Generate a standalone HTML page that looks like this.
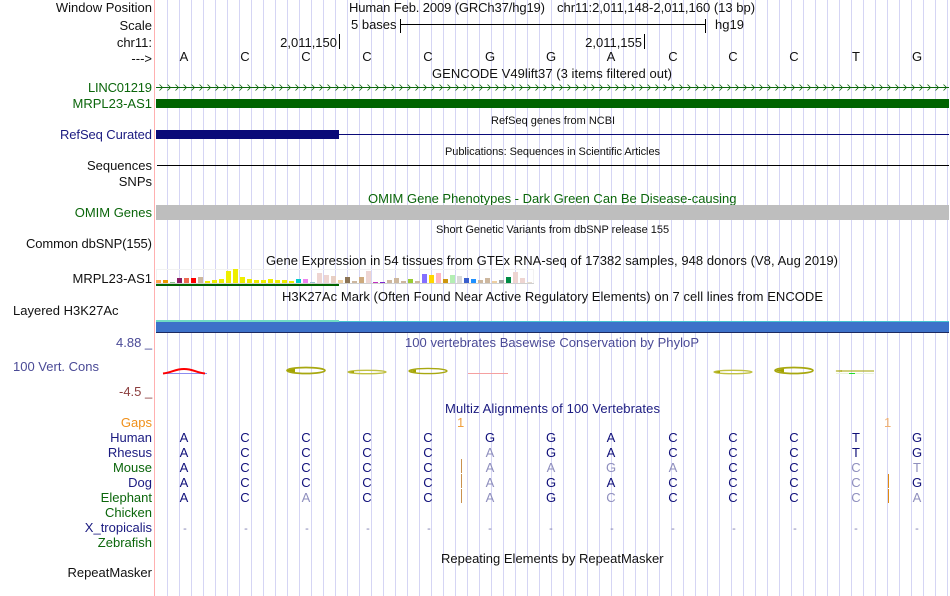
<!DOCTYPE html>
<html><head><meta charset="utf-8"><title>Genome Browser</title>
<style>
html,body{margin:0;padding:0;background:#fff}
svg{display:block}
text{font-family:"Liberation Sans",Arial,sans-serif;font-size:13px;fill:#111}
.e{text-anchor:end}
.g{fill:#0b660b}
.n{fill:#1a1a80}
.m{text-anchor:middle}
.d{fill:#10107a;text-anchor:middle}
.f{fill:#8f8fbe;text-anchor:middle}
.s{font-size:11px}
</style></head><body>
<svg width="950" height="596" viewBox="0 0 950 596" xmlns="http://www.w3.org/2000/svg">
<defs>
<pattern id="chev" x="157" y="83" width="8" height="9" patternUnits="userSpaceOnUse"><path d="M2.5 1.5L5.5 4.5L2.5 7.5" fill="none" stroke="#0b660b" stroke-width=".8"/></pattern>
</defs>
<rect width="950" height="596" fill="#fff"/>
<line x1="167" y1="298" x2="949" y2="298" stroke="#d5d5f4" stroke-width="596" stroke-dasharray="1 11"/>
<rect x="154" y="0" width="1" height="596" fill="#ffb0b0"/>

<!-- header -->
<text class="e" x="152" y="12">Window Position</text>
<text class="e" x="152" y="30">Scale</text>
<text class="e" x="152" y="47">chr11:</text>
<text class="e" x="152" y="63">---&gt;</text>
<text x="349" y="12" textLength="196">Human Feb. 2009 (GRCh37/hg19)</text>
<text x="557" y="12">chr11:2,011,148-2,011,160 (13 bp)</text>
<text x="351" y="29">5 bases</text>
<path d="M400.5 19V33M705.5 19V33" stroke="#000" fill="none"/>
<rect x="400" y="24" width="306" height="1" fill="#000"/>
<text x="715" y="29">hg19</text>
<text class="e" x="337" y="47">2,011,150</text>
<rect x="339" y="34" width="1" height="15" fill="#000"/>
<text class="e" x="642" y="47">2,011,155</text>
<rect x="644" y="34" width="1" height="15" fill="#000"/>
<text class="m" x="184 245 306 367 428 490 551 611 673 733 794 856 917" y="61">ACCCCGGACCCTG</text>

<!-- GENCODE -->
<text x="432" y="78" textLength="240">GENCODE V49lift37 (3 items filtered out)</text>
<text class="g" x="88" y="92" textLength="64">LINC01219</text>
<rect x="156" y="87" width="793" height="1" fill="#0b660b"/>
<rect x="156" y="83" width="793" height="9" fill="url(#chev)"/>
<text class="e g" x="152" y="108">MRPL23-AS1</text>
<rect x="156" y="99" width="793" height="9" fill="#006400"/>

<!-- RefSeq -->
<text class="s" x="491" y="124">RefSeq genes from NCBI</text>
<text class="n" x="60" y="139" textLength="92">RefSeq Curated</text>
<rect x="156" y="130" width="183" height="9" fill="#0a0a78"/>
<rect x="339" y="134" width="610" height="1" fill="#0a0a78"/>

<!-- Publications -->
<text class="s" x="445" y="155" textLength="215">Publications: Sequences in Scientific Articles</text>
<text class="e" x="152" y="170">Sequences</text>
<rect x="157" y="165" width="792" height="1" fill="#000"/>
<text class="e" x="152" y="186">SNPs</text>

<!-- OMIM -->
<text class="g" x="368" y="203">OMIM Gene Phenotypes - Dark Green Can Be Disease-causing</text>
<text class="e g" x="152" y="217">OMIM Genes</text>
<rect x="156" y="205" width="793" height="15" fill="#bebebe"/>

<!-- dbSNP -->
<text class="s" x="436" y="233">Short Genetic Variants from dbSNP release 155</text>
<text x="26" y="248" textLength="126">Common dbSNP(155)</text>

<!-- GTEx -->
<text x="266" y="265" textLength="572">Gene Expression in 54 tissues from GTEx RNA-seq of 17382 samples, 948 donors (V8, Aug 2019)</text>
<text class="e" x="152" y="283">MRPL23-AS1</text>
<rect x="156.5" y="269.5" width="377" height="14" fill="none" stroke="#f2f2f2"/>
<rect x="156" y="283" width="378" height="1" fill="#d0d0d0"/>
<g>
<rect x="156" y="280" width="5" height="3" fill="#ffa54f"/>
<rect x="163" y="280" width="5" height="3" fill="#ee9a00"/>
<rect x="170" y="282" width="5" height="1" fill="#8fbc8f"/>
<rect x="177" y="278" width="5" height="5" fill="#8b1c62"/>
<rect x="184" y="278" width="5" height="5" fill="#ee6a50"/>
<rect x="191" y="278" width="5" height="5" fill="#ff0000"/>
<rect x="198" y="277" width="5" height="6" fill="#cdb79e"/>
<rect x="205" y="281" width="5" height="2" fill="#eeee00"/>
<rect x="212" y="280" width="5" height="3" fill="#eeee00"/>
<rect x="219" y="279" width="5" height="4" fill="#eeee00"/>
<rect x="226" y="271" width="5" height="12" fill="#eeee00"/>
<rect x="233" y="269" width="5" height="14" fill="#eeee00"/>
<rect x="240" y="277" width="5" height="6" fill="#eeee00"/>
<rect x="247" y="279" width="5" height="4" fill="#eeee00"/>
<rect x="254" y="280" width="5" height="3" fill="#eeee00"/>
<rect x="261" y="280" width="5" height="3" fill="#eeee00"/>
<rect x="268" y="279" width="5" height="4" fill="#eeee00"/>
<rect x="275" y="280" width="5" height="3" fill="#eeee00"/>
<rect x="282" y="280" width="5" height="3" fill="#eeee00"/>
<rect x="289" y="281" width="5" height="2" fill="#eeee00"/>
<rect x="296" y="279" width="5" height="4" fill="#00cdcd"/>
<rect x="303" y="279" width="5" height="4" fill="#ee82ee"/>
<rect x="310" y="282" width="5" height="1" fill="#9ac0cd"/>
<rect x="317" y="273" width="5" height="10" fill="#eed5d2"/>
<rect x="324" y="275" width="5" height="8" fill="#eed5d2"/>
<rect x="331" y="276" width="5" height="7" fill="#e8cfc4"/>
<rect x="338" y="280" width="5" height="3" fill="#eecfa1"/>
<rect x="345" y="277" width="5" height="6" fill="#8b7355"/>
<rect x="352" y="281" width="5" height="2" fill="#cdb79e"/>
<rect x="359" y="277" width="5" height="6" fill="#cdaa7d"/>
<rect x="366" y="271" width="5" height="12" fill="#eed5d2"/>
<rect x="373" y="282" width="5" height="1" fill="#c030c0"/>
<rect x="380" y="282" width="5" height="1" fill="#7d26cd"/>
<rect x="387" y="280" width="5" height="3" fill="#cdb79e"/>
<rect x="394" y="278" width="5" height="5" fill="#cdb79e"/>
<rect x="401" y="281" width="5" height="2" fill="#cdb79e"/>
<rect x="408" y="279" width="5" height="4" fill="#9acd32"/>
<rect x="415" y="281" width="5" height="2" fill="#cdb79e"/>
<rect x="422" y="274" width="5" height="9" fill="#8470ff"/>
<rect x="429" y="275" width="5" height="8" fill="#ffd700"/>
<rect x="436" y="273" width="5" height="10" fill="#ffb6c1"/>
<rect x="443" y="279" width="5" height="4" fill="#cd950c"/>
<rect x="450" y="275" width="5" height="8" fill="#b4eeb4"/>
<rect x="457" y="276" width="5" height="7" fill="#d9d9d9"/>
<rect x="464" y="278" width="5" height="5" fill="#3a5fcd"/>
<rect x="471" y="279" width="5" height="4" fill="#1e90ff"/>
<rect x="478" y="280" width="5" height="3" fill="#cdb79e"/>
<rect x="485" y="278" width="5" height="5" fill="#cdb79e"/>
<rect x="492" y="281" width="5" height="2" fill="#eecfa1"/>
<rect x="499" y="280" width="5" height="3" fill="#a6a6a6"/>
<rect x="506" y="277" width="5" height="6" fill="#008b45"/>
<rect x="513" y="272" width="5" height="11" fill="#eed5d2"/>
<rect x="520" y="278" width="5" height="5" fill="#eed5d2"/>
<rect x="527" y="282" width="5" height="1" fill="#e5dcd0"/>
</g>
<rect x="156" y="284" width="183" height="2" fill="#006400"/>

<!-- H3K27Ac -->
<text x="282" y="301" textLength="541">H3K27Ac Mark (Often Found Near Active Regulatory Elements) on 7 cell lines from ENCODE</text>
<text x="13" y="315">Layered H3K27Ac</text>
<rect x="156" y="320" width="183" height="2" fill="#6fdcc4"/>
<rect x="339" y="321" width="610" height="1" fill="#45c4d0"/>
<rect x="156" y="322" width="793" height="10" fill="#3d72c9"/>
<rect x="156" y="332" width="793" height="1" fill="#1c2a60"/>

<!-- Conservation -->
<text x="116" y="347" style="fill:#4a4a96">4.88 _</text>
<text x="405" y="347" textLength="294" style="fill:#4a4a96">100 vertebrates Basewise Conservation by PhyloP</text>
<text x="13" y="371" style="fill:#4a4a96">100 Vert. Cons</text>
<text x="119" y="396" style="fill:#8c3f3f">-4.5 _</text>
<rect x="166" y="373" width="41" height="1" fill="#8c8cf0"/>
<path d="M163 373.5C172 372.5 175 369 184 369C193 369 196 372.5 205 373.5" fill="none" stroke="#f00" stroke-width="2"/>
<g fill="none" stroke="#a8a810">
<ellipse cx="306" cy="370.5" rx="19" ry="3" stroke-width="1.7"/>
<ellipse cx="367" cy="372" rx="19" ry="1.7" stroke-width="1.4" stroke="#c0c040"/>
<ellipse cx="428" cy="371" rx="19" ry="2.6" stroke-width="1.4"/>
<ellipse cx="733" cy="372" rx="19" ry="1.7" stroke-width="1.4" stroke="#c0c040"/>
<ellipse cx="794" cy="370.5" rx="19" ry="3" stroke-width="1.7"/>
<path d="M836 371H874" stroke-width="1.3" stroke="#b4b430"/>
</g>
<path d="M286 370.5L295 368.5V372.5ZM348 372L354 371V373ZM409 371L416 369.5V372.5ZM714 372L720 371V373ZM775 370.5L784 368.5V372.5ZM835 371L842 370.2V371.8Z" fill="#a4a400"/>
<rect x="836" y="373" width="38" height="1" fill="#eaf5da"/>
<rect x="849" y="373" width="6" height="1" fill="#22dd22"/>
<rect x="468" y="373" width="40" height="1" fill="#f5a0a0"/>

<!-- Multiz -->
<text x="445" y="413" class="n" textLength="215">Multiz Alignments of 100 Vertebrates</text>
<text class="e" x="152" y="427" style="fill:#f0901a">Gaps</text>
<text x="457" y="427" style="fill:#f0a040">1</text>
<text x="884" y="427" style="fill:#f0b070">1</text>

<text class="e n" x="152" y="442">Human</text>
<text class="e n" x="152" y="457">Rhesus</text>
<text class="e g" x="152" y="472">Mouse</text>
<text class="e n" x="152" y="487">Dog</text>
<text class="e g" x="152" y="502">Elephant</text>
<text class="e g" x="152" y="517">Chicken</text>
<text class="e n" x="152" y="532">X_tropicalis</text>
<text class="e g" x="152" y="547">Zebrafish</text>

<text class="d" x="184 245 306 367 428 490 551 611 673 733 794 856 917" y="442">ACCCCGGACCCTG</text>
<text class="d" x="184 245 306 367 428 551 611 673 733 794 856 917" y="457">ACCCCGACCCTG</text>
<text class="f" x="490" y="457">A</text>
<text class="d" x="184 245 306 367 428 733 794" y="472">ACCCCCC</text>
<text class="f" x="490 551 611 673 856 917" y="472">AAGACT</text>
<text class="d" x="184 245 306 367 428 551 611 673 733 794 917" y="487">ACCCCGACCCG</text>
<text class="f" x="490 856" y="487">AC</text>
<text class="d" x="184 245 367 428 551 673 733 794" y="502">ACCCGCCC</text>
<text class="f" x="306 490 611 856 917" y="502">AACCA</text>
<text class="f" x="185 246 307 368 429 490 551 612 673 734 795 856 917" y="532" style="fill:#7c7cb0;font-size:11px">-------------</text>

<rect x="461" y="459" width="1" height="14" fill="#c9914f"/>
<rect x="461" y="474" width="1" height="14" fill="#c9914f"/>
<rect x="461" y="489" width="1" height="14" fill="#c9914f"/>
<rect x="888" y="474" width="1" height="14" fill="#e08a10"/>
<rect x="888" y="489" width="1" height="14" fill="#e08a10"/>

<!-- Repeat -->
<text x="441" y="563">Repeating Elements by RepeatMasker</text>
<text class="e" x="152" y="577">RepeatMasker</text>
</svg>
</body></html>
